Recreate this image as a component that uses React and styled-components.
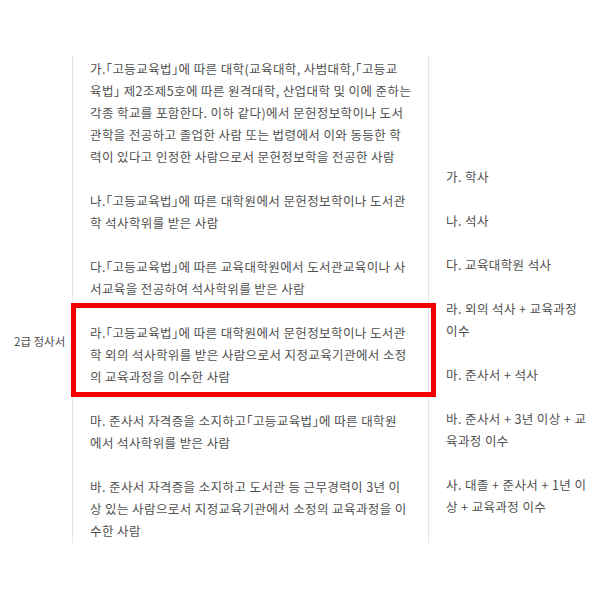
import React from 'react';
import styled, { createGlobalStyle } from 'styled-components';

const GlobalStyle = createGlobalStyle`
  body {
    margin: 0;
    background: #ffffff;
  }
`;

const Table = styled.div`
  display: grid;
  grid-template-columns: 73px 356px 1fr;
  margin-top: 55px;
  height: 488px;
  font-family: "Noto Sans CJK KR", "Noto Sans", sans-serif;
  font-size: 12.5px;
  line-height: 22px;
  letter-spacing: 0.4px;
  color: #505050;
  font-feature-settings: "halt";
`;

const Cell = styled.div`
  border-right: ${(p) => (p.$last ? 'none' : '1px solid #e4e4e4')};
  padding: ${(p) => p.$top}px 17px 0 ${(p) => p.$left}px;
  white-space: nowrap;
`;

const HeadCell = styled.div`
  border-right: 1px solid #e4e4e4;
  padding: 275px 0 0 14px;
  font-size: 11.5px;
  letter-spacing: 0;
  white-space: nowrap;
`;

const Para = styled.div`
  position: relative;
  margin-bottom: 22px;

  &:last-child {
    margin-bottom: 0;
  }

  ${(p) =>
    p.$highlight &&
    `
    &::after {
      content: '';
      position: absolute;
      top: -19px;
      bottom: -9px;
      left: -19px;
      right: -25px;
      border: 5px solid #f20000;
    }
  `}
`;

const Line = styled.span`
  display: block;
  white-space: nowrap;
`;

const requirements = [
  {
    lines: [
      '가.「고등교육법」에 따른 대학(교육대학, 사범대학,「고등교',
      '육법」 제2조제5호에 따른 원격대학, 산업대학 및 이에 준하는',
      '각종 학교를 포함한다. 이하 같다)에서 문헌정보학이나 도서',
      '관학을 전공하고 졸업한 사람 또는 법령에서 이와 동등한 학',
      '력이 있다고 인정한 사람으로서 문헌정보학을 전공한 사람',
    ],
  },
  {
    lines: [
      '나.「고등교육법」에 따른 대학원에서 문헌정보학이나 도서관',
      '학 석사학위를 받은 사람',
    ],
  },
  {
    lines: [
      '다.「고등교육법」에 따른 교육대학원에서 도서관교육이나 사',
      '서교육을 전공하여 석사학위를 받은 사람',
    ],
  },
  {
    highlight: true,
    lines: [
      '라.「고등교육법」에 따른 대학원에서 문헌정보학이나 도서관',
      '학 외의 석사학위를 받은 사람으로서 지정교육기관에서 소정',
      '의 교육과정을 이수한 사람',
    ],
  },
  {
    lines: [
      '마. 준사서 자격증을 소지하고「고등교육법」에 따른 대학원',
      '에서 석사학위를 받은 사람',
    ],
  },
  {
    lines: [
      '바. 준사서 자격증을 소지하고 도서관 등 근무경력이 3년 이',
      '상 있는 사람으로서 지정교육기관에서 소정의 교육과정을 이',
      '수한 사람',
    ],
  },
];

const summary = [
  ['가. 학사'],
  ['나. 석사'],
  ['다. 교육대학원 석사'],
  ['라. 외의 석사 + 교육과정', '이수'],
  ['마. 준사서 + 석사'],
  ['바. 준사서 + 3년 이상 + 교', '육과정 이수'],
  ['사. 대졸 + 준사서 + 1년 이', '상 + 교육과정 이수'],
];

export default function App() {
  return (
    <>
      <GlobalStyle />
      <Table>
        <HeadCell>2급 정사서</HeadCell>
        <Cell $top={3} $left={17}>
          {requirements.map((item, i) => (
            <Para key={i} $highlight={item.highlight}>
              {item.lines.map((line, j) => (
                <Line key={j}>{line}</Line>
              ))}
            </Para>
          ))}
        </Cell>
        <Cell $top={111} $left={17} $last>
          {summary.map((lines, i) => (
            <Para key={i}>
              {lines.map((line, j) => (
                <Line key={j}>{line}</Line>
              ))}
            </Para>
          ))}
        </Cell>
      </Table>
    </>
  );
}
